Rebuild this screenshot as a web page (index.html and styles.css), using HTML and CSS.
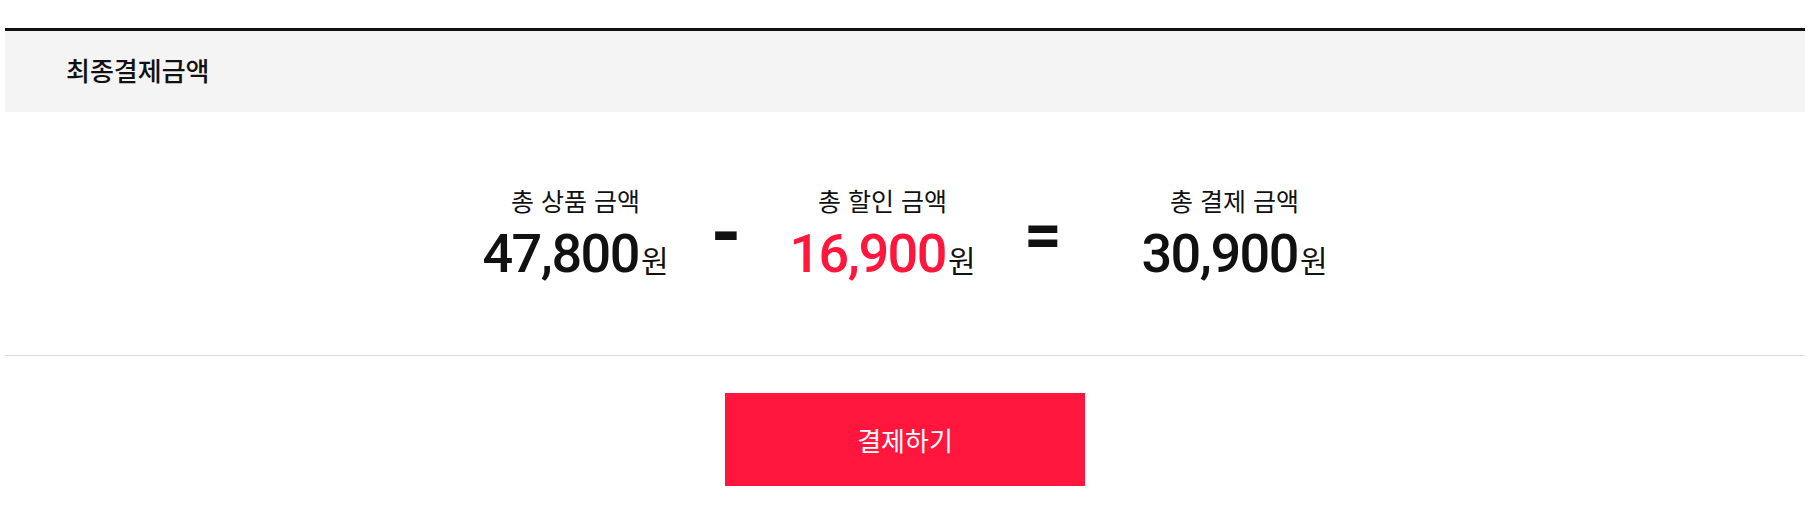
FILE: index.html
```html
<!DOCTYPE html>
<html lang="ko">
<head>
<meta charset="utf-8">
<title>최종결제금액</title>
<link rel="stylesheet" href="styles.css">
</head>
<body>
<div class="wrap">
  <section class="final">
    <div class="final-head">
      <h2 class="final-title">최종결제금액</h2>
    </div>
    <div class="summary">
      <div class="col col-1">
        <div class="label">총 상품 금액</div>
        <div class="amount"><span class="num">47,800</span><span class="won">원</span></div>
      </div>
      <div class="op op-minus">-</div>
      <div class="col col-2">
        <div class="label">총 할인 금액</div>
        <div class="amount sale"><span class="num">16,900</span><span class="won">원</span></div>
      </div>
      <div class="op op-eq">=</div>
      <div class="col col-3">
        <div class="label">총 결제 금액</div>
        <div class="amount"><span class="num">30,900</span><span class="won">원</span></div>
      </div>
    </div>
    <div class="actions">
      <button class="pay-btn" type="button">결제하기</button>
    </div>
  </section>
</div>
</body>
</html>
```
FILE: styles.css
```css
* { box-sizing: border-box; }
html, body { margin: 0; padding: 0; background: #fff; }
body {
  font-family: "Noto Sans CJK KR", "Noto Sans", sans-serif;
  color: #111;
}
.wrap {
  width: 1800px;
  margin: 0 auto;
  padding-top: 28px;
}
.final-head {
  border-top: 3px solid #111;
  background: #f4f4f4;
  height: 84px;
  display: flex;
  align-items: center;
  padding-left: 61px;
  padding-bottom: 3px;
}
.final-title {
  margin: 0;
  font-size: 26px;
  font-weight: 500;
  line-height: 1;
  color: #111;
}
.summary {
  display: flex;
  justify-content: center;
  align-items: flex-start;
  padding: 73px 0 0 37px;
  height: 244px;
  border-bottom: 1px solid #ddd;
}
.col {
  display: flex;
  flex-direction: column;
  align-items: center;
}
.col-1 { width: 200px; }
.col-2 { width: 212px; }
.col-3 { width: 274px; }
.label {
  font-size: 25px;
  line-height: 30px;
  font-weight: 400;
  color: #111;
}
.amount {
  display: flex;
  align-items: baseline;
  margin-top: 9px;
  white-space: nowrap;
}
.num {
  font-family: Roboto, "Noto Sans", sans-serif;
  font-size: 54px;
  font-weight: 500;
  line-height: 60px;
  letter-spacing: -1.5px;
  color: #111;
}
.won {
  font-size: 30px;
  font-weight: 400;
  margin-left: 2px;
  color: #111;
}
.sale .num { color: #ff163c; }
.op {
  font-family: Roboto, sans-serif;
  font-weight: 700;
  color: #111;
  text-align: center;
  line-height: 1;
}
.op-minus { width: 101px; font-size: 78px; padding-top: 10px; }
.op-eq { width: 109px; font-size: 66px; padding-top: 17px; }
.actions {
  display: flex;
  justify-content: center;
  padding: 37px 0 27px;
}
.pay-btn {
  width: 360px;
  height: 93px;
  border: 0;
  border-radius: 0;
  background: #ff163c;
  color: #fff;
  font-family: "Noto Sans CJK KR", "Noto Sans", sans-serif;
  font-size: 26px;
  font-weight: 400;
  cursor: pointer;
}
```
